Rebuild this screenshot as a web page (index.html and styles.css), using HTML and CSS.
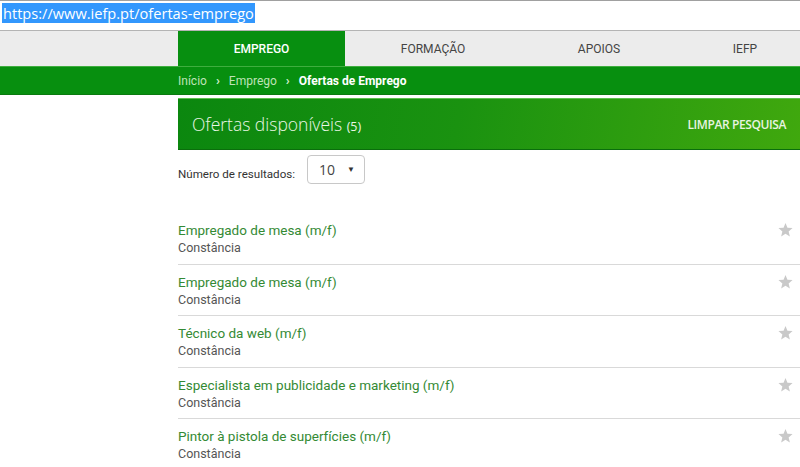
FILE: index.html
```html
<!DOCTYPE html>
<html lang="pt">
<head>
<meta charset="utf-8">
<title>Ofertas de Emprego</title>
<link rel="stylesheet" href="styles.css">
</head>
<body>
<div class="urlbar"><span class="url">https://www.iefp.pt/ofertas-emprego</span></div>
<nav class="tabs">
  <a class="tab tab-1 active">EMPREGO</a>
  <a class="tab tab-2">FORMAÇÃO</a>
  <a class="tab tab-3">APOIOS</a>
  <a class="tab tab-4">IEFP</a>
</nav>
<div class="crumbs">
  <span class="crumb">Início</span>
  <span class="sep">›</span>
  <span class="crumb">Emprego</span>
  <span class="sep">›</span>
  <span class="crumb current">Ofertas de Emprego</span>
</div>
<main class="content">
  <div class="panel">
    <h1 class="panel-title">Ofertas disponíveis <span class="count">(5)</span></h1>
    <a class="clear">LIMPAR PESQUISA</a>
  </div>
  <div class="results">
    <span class="results-label">Número de resultados:</span>
    <div class="select"><span>10</span><span class="caret">▼</span></div>
  </div>
  <ul class="list">
    <li class="item"><div><div class="title">Empregado de mesa (m/f)</div><div class="place">Constância</div></div><svg class="star" viewBox="0 0 24 24"><path d="M12 1.5l3.1 7.6 8.2.6-6.3 5.3 2 8-7-4.4-7 4.4 2-8L.7 9.7l8.2-.6z"/></svg></li>
    <li class="item"><div><div class="title">Empregado de mesa (m/f)</div><div class="place">Constância</div></div><svg class="star" viewBox="0 0 24 24"><path d="M12 1.5l3.1 7.6 8.2.6-6.3 5.3 2 8-7-4.4-7 4.4 2-8L.7 9.7l8.2-.6z"/></svg></li>
    <li class="item"><div><div class="title">Técnico da web (m/f)</div><div class="place">Constância</div></div><svg class="star" viewBox="0 0 24 24"><path d="M12 1.5l3.1 7.6 8.2.6-6.3 5.3 2 8-7-4.4-7 4.4 2-8L.7 9.7l8.2-.6z"/></svg></li>
    <li class="item"><div><div class="title">Especialista em publicidade e marketing (m/f)</div><div class="place">Constância</div></div><svg class="star" viewBox="0 0 24 24"><path d="M12 1.5l3.1 7.6 8.2.6-6.3 5.3 2 8-7-4.4-7 4.4 2-8L.7 9.7l8.2-.6z"/></svg></li>
    <li class="item"><div><div class="title">Pintor à pistola de superfícies (m/f)</div><div class="place">Constância</div></div><svg class="star" viewBox="0 0 24 24"><path d="M12 1.5l3.1 7.6 8.2.6-6.3 5.3 2 8-7-4.4-7 4.4 2-8L.7 9.7l8.2-.6z"/></svg></li>
  </ul>
</main>
</body>
</html>
```
FILE: styles.css
```css
* { box-sizing: border-box; }
html, body { margin: 0; padding: 0; background: #fff; overflow: hidden; }
body { font-family: Roboto, "Liberation Sans", sans-serif; color: #333; }

.urlbar {
  height: 31px;
  border-top: 1px solid #a0a0a0;
  border-bottom: 1px solid #b4b4b4;
  padding: 2px 0 0 2px;
  background: #fff;
}
.url {
  display: inline-block;
  font-family: "Open Sans", "Noto Sans", sans-serif;
  font-size: 14.6px;
  line-height: 20px;
  background: #3297fd;
  color: #fff;
  padding: 0 1px;
}

.tabs {
  display: flex;
  height: 36px;
  background: #ececec;
  padding-left: 178px;
  border-bottom: 1px solid #3fae3f;
}
.tab {
  display: flex;
  align-items: center;
  justify-content: center;
  font-size: 12px;
  font-weight: 400;
  color: #444;
  text-decoration: none;
  flex: none;
}
.tab-1 { width: 167px; }
.tab-2 { width: 176px; }
.tab-3 { width: 156px; }
.tab-4 { width: 136px; }
.tab.active { background: #078f10; color: #fff; font-weight: 500; }

.crumbs {
  height: 28px;
  background: #078f0f;
  border-bottom: 1px solid #0a7a0f;
  display: flex;
  align-items: center;
  padding-left: 178px;
  gap: 9px;
  font-size: 12px;
}
.crumb { color: #bfe3b8; }
.crumb.current { color: #fff; font-weight: 700; }
.sep { color: #d6f0d0; font-weight: 700; font-size: 13px; }

.content { margin: 3px 0 0 178px; }

.panel {
  height: 52px;
  background: linear-gradient(100deg, #0b870f 0%, #1a9210 45%, #40a80e 100%);
  border-top: 1px solid #5cbf4c;
  border-bottom: 1px solid #0a6e0c;
  display: flex;
  align-items: center;
  justify-content: space-between;
  padding: 0 14px 0 14px;
}
.panel-title {
  margin: 0;
  font-family: "Open Sans", "Noto Sans", sans-serif;
  font-weight: 300;
  font-size: 17.5px;
  color: #eaf6e6;
}
.count { font-size: 12.5px; font-weight: 400; }
.clear {
  font-family: "Open Sans", "Noto Sans", sans-serif;
  font-size: 12px;
  font-weight: 600;
  color: #e8f4e0;
  letter-spacing: -0.4px;
}

.results {
  display: flex;
  align-items: center;
  margin-top: 5px;
  height: 29px;
}
.results-label { font-size: 11.6px; color: #333; width: 129px; padding-top: 9px; }
.select {
  width: 58px;
  height: 29px;
  border: 1px solid #c8c8c8;
  border-radius: 4px;
  display: flex;
  align-items: center;
  justify-content: space-between;
  padding: 0 9px 0 11px;
  font-family: "Open Sans", "Noto Sans", sans-serif;
  font-size: 14px;
  color: #444;
}
.caret { font-size: 8px; color: #333; margin-top: -3px; }

.list { list-style: none; margin: 29px 0 0 0; padding: 0; }
.item {
  display: flex;
  justify-content: space-between;
  align-items: flex-start;
  padding: 9px 7px 7.5px 0;
  border-bottom: 1px solid #d9d9d9;
}
.title { font-size: 13.5px; line-height: 17px; color: #348a34; }
.place { font-size: 12.5px; line-height: 17px; color: #555; }
.star { width: 15px; height: 15px; fill: #c9c9c9; margin-top: 0; }
```
